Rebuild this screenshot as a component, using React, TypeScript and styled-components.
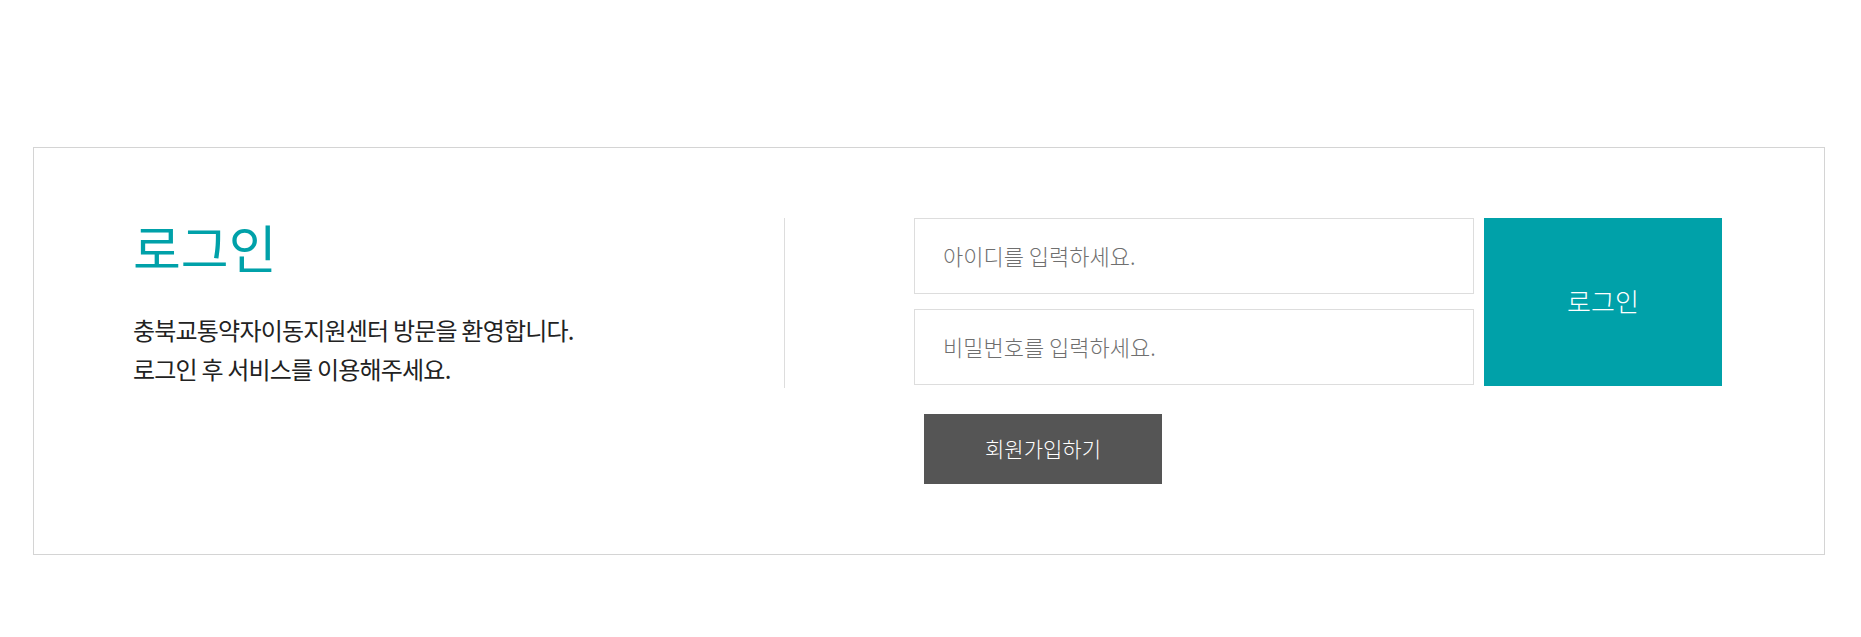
import React from "react";
import styled, { createGlobalStyle } from "styled-components";

const GlobalStyle = createGlobalStyle`
  html, body {
    margin: 0;
    padding: 0;
    background: #ffffff;
  }
  body {
    font-family: "Noto Sans CJK KR", "Noto Sans", sans-serif;
    color: #222222;
  }
  * { box-sizing: border-box; }
`;

const Page = styled.div`
  padding: 147px 36px 0 33px;
`;

const Box = styled.section`
  border: 1px solid #d4d4d4;
  display: flex;
  padding: 70px 0 70px 99px;
`;

const Intro = styled.div`
  width: 651px;
  flex: none;
`;

const Title = styled.h2`
  margin: 0;
  font-size: 52px;
  font-weight: 400;
  line-height: 1;
  letter-spacing: 0;
  color: #00a1a9;
  padding-top: 3px;
`;

const Desc = styled.p`
  margin: 37px 0 0;
  font-size: 24px;
  line-height: 39px;
  letter-spacing: -0.8px;
  color: #222222;
`;

const RightCol = styled.div`
  display: flex;
  flex-direction: column;
`;

const FormRow = styled.div`
  display: flex;
  align-items: flex-start;
  gap: 10px;
  height: 170px;
  border-left: 1px solid #dddddd;
  padding-left: 129px;
`;

const Fields = styled.div`
  display: flex;
  flex-direction: column;
  gap: 15px;
  width: 560px;
`;

const Field = styled.input`
  display: block;
  width: 100%;
  height: 76px;
  border: 1px solid #dddddd;
  padding: 0 28px 2px;
  font-family: "Noto Sans CJK KR", "Noto Sans", sans-serif;
  font-size: 22px;
  font-weight: 300;
  color: #333;
  outline: none;
  background: #fff;
  &::placeholder {
    color: #6f6f6f;
  }
`;

const LoginButton = styled.button`
  width: 238px;
  height: 168px;
  border: none;
  background: #00a1a9;
  color: #ffffff;
  font-family: "Noto Sans CJK KR", "Noto Sans", sans-serif;
  font-size: 26px;
  font-weight: 300;
  cursor: pointer;
  padding: 0 0 4px;
`;

const JoinButton = styled.button`
  margin: 26px 0 0 140px;
  width: 238px;
  height: 70px;
  border: none;
  background: #555555;
  color: #ffffff;
  font-family: "Noto Sans CJK KR", "Noto Sans", sans-serif;
  font-size: 21px;
  font-weight: 300;
  cursor: pointer;
  padding: 0 0 2px;
`;

export default function App() {
  return (
    <>
      <GlobalStyle />
      <Page>
        <Box>
          <Intro>
            <Title>로그인</Title>
            <Desc>
              충북교통약자이동지원센터 방문을 환영합니다.
              <br />
              로그인 후 서비스를 이용해주세요.
            </Desc>
          </Intro>
          <RightCol>
            <FormRow>
              <Fields>
                <Field type="text" placeholder="아이디를 입력하세요." />
                <Field type="password" placeholder="비밀번호를 입력하세요." />
              </Fields>
              <LoginButton type="button">로그인</LoginButton>
            </FormRow>
            <JoinButton type="button">회원가입하기</JoinButton>
          </RightCol>
        </Box>
      </Page>
    </>
  );
}
